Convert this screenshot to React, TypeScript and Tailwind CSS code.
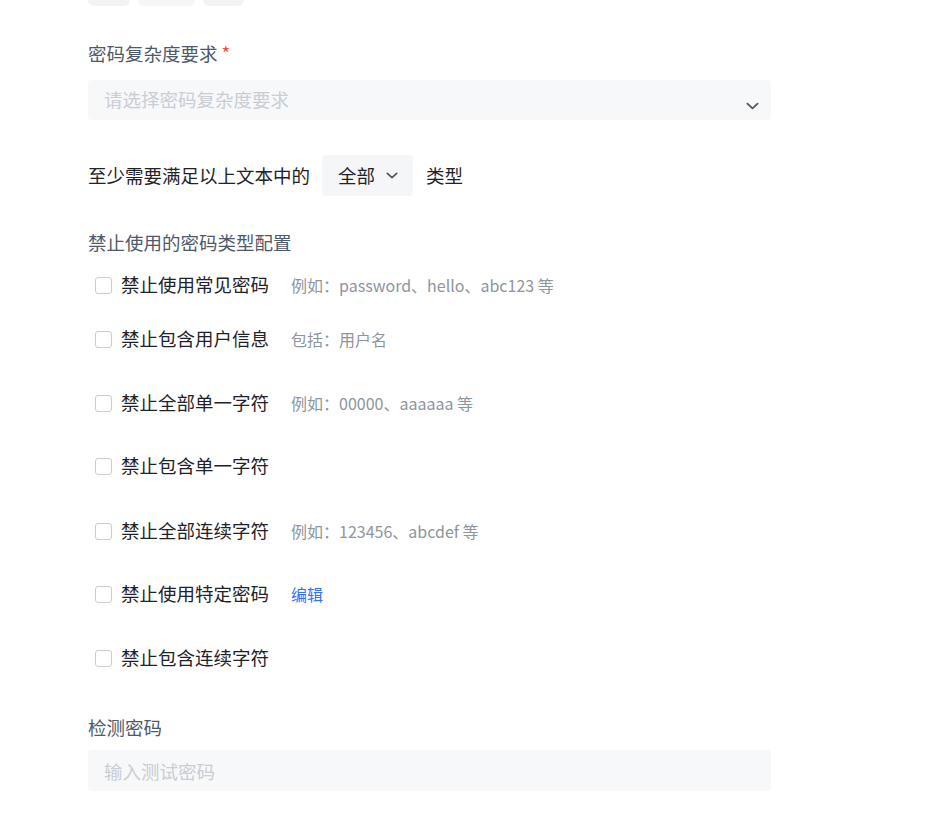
import { useState } from 'react';

const FONT = { fontFamily: '"Noto Sans CJK SC", "Noto Sans", sans-serif' };

function Chevron({ className }: { className?: string }) {
  return (
    <svg viewBox="0 0 14 8" className={className} fill="none">
      <path d="M1.5 1.5 7 6.5l5.5-5" stroke="currentColor" strokeWidth="2" strokeLinecap="round" strokeLinejoin="round" />
    </svg>
  );
}

const RULES = [
  { label: '禁止使用常见密码', hint: '例如：password、hello、abc123 等', mt: 'mt-[17px]' },
  { label: '禁止包含用户信息', hint: '包括：用户名', mt: 'mt-[28px]' },
  { label: '禁止全部单一字符', hint: '例如：00000、aaaaaa 等', mt: 'mt-[38px]' },
  { label: '禁止包含单一字符', mt: 'mt-[37px]' },
  { label: '禁止全部连续字符', hint: '例如：123456、abcdef 等', mt: 'mt-[39px]' },
  { label: '禁止使用特定密码', link: '编辑', mt: 'mt-[37px]' },
  { label: '禁止包含连续字符', mt: 'mt-[38px]' },
];

export default function App() {
  const [checked, setChecked] = useState<boolean[]>(RULES.map(() => false));

  return (
    <div className="min-h-screen bg-white pl-[88px]" style={FONT}>
      <div className="w-[683px]">
        <div className="flex gap-2">
          <div className="h-[6px] w-[42px] rounded-b-md bg-[#f2f3f5]" />
          <div className="h-[6px] w-[57px] rounded-b-md bg-[#f5f6f7]" />
          <div className="h-[6px] w-[41px] rounded-b-md bg-[#f2f3f5]" />
        </div>

        <div className="mt-[34px] text-[18.5px] leading-[26px] text-[#4e5969]">
          密码复杂度要求<span className="ml-1 text-[#f54a45]">*</span>
        </div>
        <div className="mt-[14px] flex h-[40px] items-center justify-between rounded bg-[#f7f8fa] pl-4 pr-3">
          <span className="text-[18.5px] text-[#c9cdd4]">请选择密码复杂度要求</span>
          <Chevron className="mt-3 h-[8px] w-[13px] text-[#4e5969]" />
        </div>

        <div className="mt-[35px] flex items-center text-[18.5px] text-[#1f2329]">
          <span>至少需要满足以上文本中的</span>
          <div className="ml-3 flex h-[41px] w-[91px] items-center gap-[11px] rounded bg-[#f5f6f7] pl-4">
            <span>全部</span>
            <Chevron className="h-[7px] w-[12px] text-[#4e5969]" />
          </div>
          <span className="ml-[13px]">类型</span>
        </div>

        <div className="mt-[33px] text-[18.5px] leading-[26px] text-[#4e5969]">禁止使用的密码类型配置</div>

        {RULES.map((rule, i) => (
          <label key={rule.label} className={`${rule.mt} flex h-[26px] cursor-pointer items-center`}>
            <input
              type="checkbox"
              className="hidden"
              checked={checked[i]}
              onChange={() => setChecked(checked.map((c, j) => (j === i ? !c : c)))}
            />
            <span className="ml-[7px] h-[17px] w-[17px] rounded-[3px] border border-[#c9cdd4] bg-white" />
            <span className="ml-[9px] text-[18.5px] text-[#1f2329]">{rule.label}</span>
            {rule.hint && <span className="ml-[22px] text-[16px] text-[#8f959e]">{rule.hint}</span>}
            {rule.link && <span className="ml-[22px] text-[16px] text-[#3370ff]">{rule.link}</span>}
          </label>
        ))}

        <div className="mt-[43px] text-[18.5px] leading-[26px] text-[#4e5969]">检测密码</div>
        <input
          placeholder="输入测试密码"
          className="mt-[10px] h-[41px] w-full rounded bg-[#f7f8fa] px-4 text-[18.5px] text-[#1f2329] outline-none placeholder:text-[#c9cdd4]"
        />
      </div>
    </div>
  );
}
